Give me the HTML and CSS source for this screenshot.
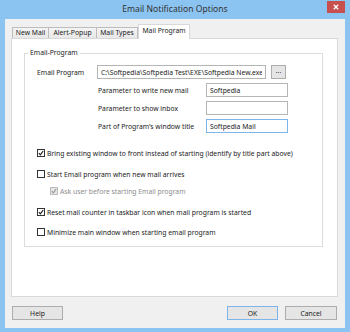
FILE: index.html
```html
<!DOCTYPE html>
<html lang="en">
<head>
    <meta charset="UTF-8">
    <meta name="viewport" content="width=device-width, initial-scale=1.0">
    <title>Email Notification Options</title>
    <link rel="stylesheet" href="styles.css">
</head>
<body>
    <div class="window">
        <div class="titlebar">
            <span class="title">Email Notification Options</span>
            <button class="close-btn" aria-label="Close">
                <svg width="6" height="6" viewBox="0 0 6 6"><path d="M0.8 0.8 L5.2 5.2 M5.2 0.8 L0.8 5.2" stroke="#fff" stroke-width="1.3"/></svg>
            </button>
        </div>

        <div class="client">
            <div class="tabs">
                <div class="tab tab-new">New Mail</div>
                <div class="tab tab-alert">Alert-Popup</div>
                <div class="tab tab-types">Mail Types</div>
                <div class="tab active">Mail Program</div>
            </div>

            <div class="panel">
                <fieldset class="group">
                    <legend>Email-Program</legend>

                    <div class="row program-row">
                        <label class="row-label">Email Program</label>
                        <input class="field path-field" type="text" value="C:\Softpedia\Softpedia Test\EXE\Softpedia New.exe">
                        <button class="browse-btn">...</button>
                    </div>
                    <div class="row param-row">
                        <label class="row-label">Parameter to write new mail</label>
                        <input class="field" type="text" value="Softpedia">
                    </div>
                    <div class="row param-row">
                        <label class="row-label">Parameter to show inbox</label>
                        <input class="field" type="text" value="">
                    </div>
                    <div class="row param-row">
                        <label class="row-label">Part of Program's window title</label>
                        <input class="field focused" type="text" value="Softpedia Mail">
                    </div>

                    <div class="check first">
                        <span class="box checked"></span>
                        <span>Bring existing window to front instead of starting (identify by title part above)</span>
                    </div>
                    <div class="check start">
                        <span class="box"></span>
                        <span>Start Email program when new mail arrives</span>
                    </div>
                    <div class="check sub disabled">
                        <span class="box checked"></span>
                        <span>Ask user before starting Email program</span>
                    </div>
                    <div class="check reset">
                        <span class="box checked"></span>
                        <span>Reset mail counter in taskbar icon when mail program is started</span>
                    </div>
                    <div class="check minimize">
                        <span class="box"></span>
                        <span>Minimize main window when starting email program</span>
                    </div>
                </fieldset>
            </div>

            <div class="buttons">
                <button class="btn help">Help</button>
                <button class="btn ok">OK</button>
                <button class="btn cancel">Cancel</button>
            </div>
        </div>
    </div>
</body>
</html>
```

FILE: styles.css
```css
* {
    box-sizing: border-box;
}

body {
    margin: 0;
    font-family: "Noto Sans", "Open Sans", sans-serif;
    font-size: 6.8px;
    color: #1a1a1a;
    background-color: #8bc3f1;
}

.window {
    width: 350px;
    height: 332px;
    display: flex;
    flex-direction: column;
    background-color: #8bc3f1;
}

.titlebar {
    height: 19px;
    display: grid;
    grid-template-columns: 1fr auto 1fr;
}

.title {
    grid-column: 2;
    font-size: 8.6px;
    line-height: 19px;
    color: #333;
}

.close-btn {
    grid-column: 3;
    justify-self: end;
    align-self: start;
    width: 18px;
    height: 12px;
    margin: 1px 5px 0 0;
    padding: 0;
    border: none;
    background-color: #c7504f;
    display: flex;
    align-items: center;
    justify-content: center;
}

.client {
    height: 309px;
    margin: 0 5px 4px;
    padding-top: 5px;
    background-color: #f0f0f0;
}

/* tab strip */
.tabs {
    display: flex;
    height: 14px;
    padding-left: 7px;
    position: relative;
    z-index: 1;
}

.tab {
    height: 11px;
    margin-top: 3px;
    border: 1px solid #bdbdbd;
    border-bottom: none;
    border-left: none;
    background: linear-gradient(#f4f4f4, #e8e8e8);
    line-height: 10px;
    text-align: center;
    white-space: nowrap;
    color: #1a1a1a;
}

.tab-new {
    width: 37px;
    border-left: 1px solid #bdbdbd;
}

.tab-alert {
    width: 48px;
}

.tab-types {
    width: 41px;
}

.tab.active {
    width: 52px;
    height: 15px;
    margin-top: 0;
    border: 1px solid #d9d9d9;
    border-bottom: none;
    background: #fff;
    line-height: 12px;
}

.panel {
    height: 259px;
    margin: 0 7px 0 6px;
    padding: 9px 14px 0 12px;
    border: 1px solid #d9d9d9;
    background-color: #fff;
}

.group {
    margin: 0;
    min-width: 0;
    padding: 7px 12px 9px 12px;
    border: 1px solid #dcdcdc;
}

.group legend {
    margin-left: -9px;
    padding: 0 2px;
    line-height: 10px;
}

.row {
    display: flex;
    align-items: center;
    height: 14px;
}

.row-label {
    flex-shrink: 0;
}

.program-row .row-label {
    width: 60px;
}

.param-row {
    margin-top: 4px;
    padding-left: 61px;
}

.param-row .row-label {
    width: 108px;
}

.field {
    height: 14px;
    width: 82px;
    padding: 0 3px;
    border: 1px solid #b5b5b5;
    font-family: inherit;
    font-size: 6.8px;
    color: #1a1a1a;
    background: #fff;
    outline: none;
}

.field.focused {
    border-color: #7eb4ea;
}

.path-field {
    width: 169px;
}

.browse-btn {
    width: 15px;
    height: 14px;
    margin-left: 5px;
    padding: 0 0 3px;
    border: 1px solid #adadad;
    background: #e5e5e5;
    font-family: inherit;
    font-size: 6.8px;
    line-height: 8px;
    color: #333;
}

/* checkbox rows */
.check {
    display: flex;
    align-items: center;
    height: 10px;
    margin-top: 11px;
}

.check.first {
    margin-top: 15px;
}

.check.sub {
    margin-top: 7px;
    padding-left: 13px;
}

.check.minimize {
    margin-top: 10px;
}

.box {
    width: 8px;
    height: 8px;
    margin-right: 2px;
    border: 1px solid #333;
    background: #fff;
    flex-shrink: 0;
}

.box.checked {
    background: #fff url("data:image/svg+xml,%3Csvg xmlns='http://www.w3.org/2000/svg' viewBox='0 0 6 6'%3E%3Cpath d='M0.8 3.2 L2.4 4.8 L5.2 1' fill='none' stroke='%23222' stroke-width='1.2'/%3E%3C/svg%3E") center / 6px 6px no-repeat;
}

.check.disabled {
    color: #8d8d8d;
}

.check.disabled .box {
    border-color: #bcbcbc;
    background-color: #e6e6e6;
    background-image: url("data:image/svg+xml,%3Csvg xmlns='http://www.w3.org/2000/svg' viewBox='0 0 6 6'%3E%3Cpath d='M0.8 3.2 L2.4 4.8 L5.2 1' fill='none' stroke='%23999' stroke-width='1.2'/%3E%3C/svg%3E");
}

/* bottom buttons */
.buttons {
    display: flex;
    margin-top: 9px;
    padding: 0 8px 0 7px;
}

.btn {
    height: 14px;
    width: 51px;
    padding: 0;
    border: 1px solid #adadad;
    background: #e5e5e5;
    font-family: inherit;
    font-size: 6.8px;
    color: #1a1a1a;
}

.btn.ok {
    margin-left: auto;
    border-color: #7eb4ea;
}

.btn.cancel {
    width: 52px;
    margin-left: 7px;
}
```
